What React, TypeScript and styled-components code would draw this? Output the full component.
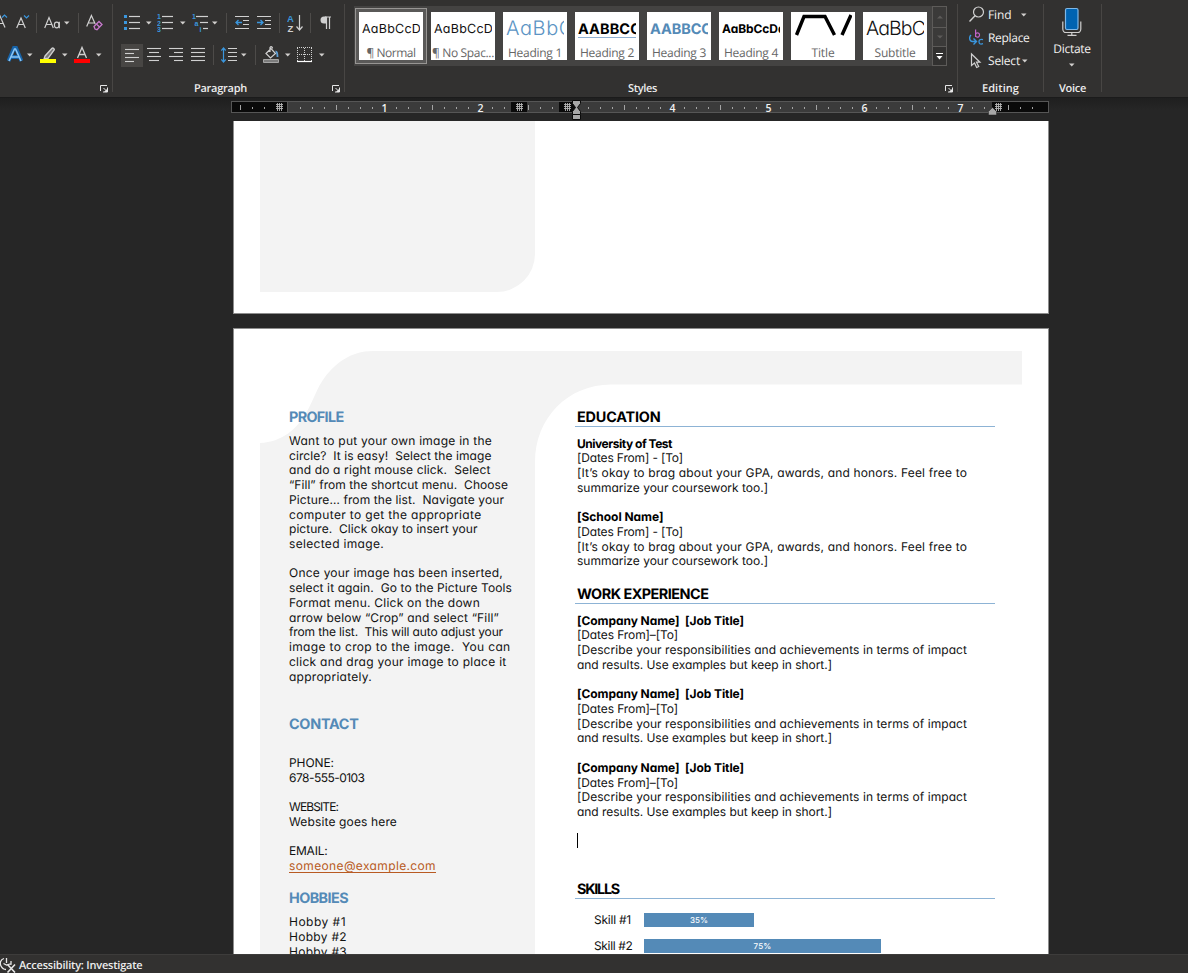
import React, { useLayoutEffect, useRef, useState } from "react";
import styled, { createGlobalStyle, css } from "styled-components";

const ui = `"Open Sans", "Noto Sans", sans-serif`;
const gothic = `Inter, Lato, sans-serif`;

const Global = createGlobalStyle`
  html, body { margin: 0; padding: 0; background: #262626; overflow: hidden; }
  * { box-sizing: border-box; }
  svg { display: block; flex: none; }
`;

/* Text tracked out (or in) so that it fills a given measure. */
const FitText = styled.span`
  display: inline-block;
  white-space: pre;
  text-rendering: geometricPrecision;
`;
function Fit({ w, children }: { w: number; children: string }) {
  const ref = useRef<HTMLSpanElement>(null);
  const [spacing, setSpacing] = useState(0);
  useLayoutEffect(() => {
    const el = ref.current;
    if (!el) return;
    el.style.letterSpacing = "0px";
    const natural = el.getBoundingClientRect().width;
    setSpacing((w - natural) / children.length);
    el.style.letterSpacing = `${(w - natural) / children.length}px`;
  }, [w, children]);
  return <FitText ref={ref} style={{ letterSpacing: `${spacing}px` }}>{children}</FitText>;
}

const Window = styled.div`
  width: 1188px;
  height: 973px;
  display: flex;
  flex-direction: column;
  overflow: hidden;
  background: #262626;
  font-family: ${ui};
`;

/* ---------- ribbon ---------- */
const Ribbon = styled.header`
  height: 98px;
  flex: none;
  display: flex;
  background: #323130;
  border-bottom: 1px solid #1b1b1b;
`;
const Group = styled.section<{ $w: number }>`
  position: relative;
  width: ${(p) => p.$w}px;
  height: 97px;
  flex: none;
  display: flex;
  flex-direction: column;
  padding-top: 11px;
  &::after {
    content: "";
    position: absolute;
    right: 0;
    top: 4px;
    width: 1px;
    height: 88px;
    background: #484644;
  }
`;
const ToolRow = styled.div`
  display: flex;
  height: 24px;
  margin-bottom: 8px;
  align-items: center;
`;
const Slot = styled.div<{ $ml?: number }>`
  margin-left: ${(p) => p.$ml ?? 0}px;
  flex: none;
`;
const Divider = styled.div<{ $ml: number }>`
  width: 1px;
  height: 20px;
  margin-left: ${(p) => p.$ml}px;
  background: #4d4b49;
`;
const Pressed = styled.div`
  width: 22px;
  height: 23px;
  margin-left: 8px;
  padding-left: 3px;
  background: #484644;
`;
const Caption = styled.div<{ $shift?: number }>`
  position: absolute;
  left: ${(p) => p.$shift ?? 0}px;
  right: 0;
  top: 80px;
  line-height: 16px;
  font-size: 11px;
  font-weight: 600;
  text-align: center;
  color: #ececec;
`;
const Launcher = styled.svg`
  position: absolute;
  right: 4px;
  bottom: 4px;
`;
const LaunchIcon = () => (
  <Launcher width="9" height="9" fill="none" stroke="#e6e6e6">
    <path d="M.5 7V1.500H7M3.500 4l3 3" />
    <path d="M7.500 3.500V8H3" />
    <path d="M7.500 4.500v3.500H4z" fill="#e6e6e6" stroke="none" />
  </Launcher>
);
const Caret = ({ ml, c = "#d2d0ce" }: { ml: number; c?: string }) => (
  <Slot $ml={ml}>
    <svg width="6" height="4"><path d="M0 .5h5.500L2.750 3.500z" fill={c} /></svg>
  </Slot>
);

const G = "#d0d0d0";
const B = "#3a96dd";
const icon = (w: number, body: React.ReactNode) => (
  <svg width={w} height="24" viewBox={`0 0 ${w} 24`} fill="none" stroke={G} strokeWidth="1">{body}</svg>
);

const AlignIcon = ({ rows }: { rows: [number, number][] }) =>
  icon(15, rows.map(([a, b], i) => <path key={i} d={`M${a} ${5.5 + i * 4}H${b}`} strokeWidth="1.1" />));

const FontGroup = () => (
  <Group $w={113}>
    <ToolRow>
      <Slot>{icon(9, <><path d="M-5 16.500L0 5l5 11.500M-3 12.500h6" strokeWidth="1.200" /><path d="M2 6.500l2.500-2.500L7 6.500" stroke={B} strokeWidth="1.200" /></>)}</Slot>
      <Slot $ml={7}>{icon(14, <><path d="M.7 17L5 7l4.300 10M2.300 13.500h5.400" strokeWidth="1.200" /><path d="M8 4.500l2.500 2.500L13 4.500" stroke={B} strokeWidth="1.200" /></>)}</Slot>
      <Divider $ml={6} />
      <Slot $ml={7}>{icon(17, <><path d="M.7 17L5 6.500 9.300 17M2.200 13.500h5.600" strokeWidth="1.200" /><ellipse cx="12.700" cy="14" rx="2.300" ry="2.800" strokeWidth="1.200" /><path d="M15.300 10.700V17.200" strokeWidth="1.200" /></>)}</Slot>
      <Caret ml={3} />
      <Divider $ml={8} />
      <Slot $ml={7}>{icon(17, <><path d="M.7 15.500L5.400 4.500l3.800 8.500M2.300 12h6" strokeWidth="1.200" /><path d="M8 15.500l5-5 3 3-5 5.200-2-.7z M10.500 13l3.200 3.200" stroke="#c779cd" strokeWidth="1.300" /></>)}</Slot>
    </ToolRow>
    <ToolRow>
      <Slot $ml={7}>{icon(16, <><path d="M1.500 18L7 5h2l5.500 13M4.500 14h7" stroke="#1763a8" strokeWidth="4" /><path d="M2 18L7.500 6h1L14 18M4.500 14h7" stroke="#8ac6f5" strokeWidth="1.600" /></>)}</Slot>
      <Caret ml={4} />
      <Slot $ml={7}>{icon(16, <><path d="M5 13L12 5.200c1-.8 3 .8 2 2L8 15.300l-4 .7z" strokeWidth="1.400" fill="#777" /><path d="M0 18h16" stroke="#ffff00" strokeWidth="4" /></>)}</Slot>
      <Caret ml={6} />
      <Slot $ml={6}>{icon(16, <><path d="M3.500 15L8 4.500 12.500 15M5 11.500h6" strokeWidth="1.300" /><path d="M0 18h16" stroke="#ff0000" strokeWidth="4" /></>)}</Slot>
      <Caret ml={6} />
    </ToolRow>
    <LaunchIcon />
  </Group>
);

const Tiny = styled.text`
  font: 700 7px "Liberation Sans", sans-serif;
  fill: ${B};
  stroke: none;
`;
const SortText = styled.text`
  font: 700 9.5px "Liberation Sans", sans-serif;
  stroke: none;
`;
const ListLines = ({ xs }: { xs: number[] }) => <>{xs.map((x, i) => <path key={i} d={`M${x} ${5.5 + i * 6}H16`} strokeWidth="1.200" />)}</>;

const ParagraphGroup = () => (
  <Group $w={232}>
    <ToolRow>
      <Slot $ml={11}>{icon(16, <><path d="M0 4h3v3H0zM0 10h3v3H0zM0 16h3v3H0z" fill={B} stroke="none" /><ListLines xs={[5, 5, 5]} /></>)}</Slot>
      <Caret ml={6} />
      <Slot $ml={5}>{icon(16, <><Tiny x="0" y="8">1</Tiny><Tiny x="0" y="14.500">2</Tiny><Tiny x="0" y="21">3</Tiny><ListLines xs={[5, 5, 5]} /></>)}</Slot>
      <Caret ml={7} />
      <Slot $ml={6}>{icon(16, <><Tiny x="0" y="8">1</Tiny><Tiny x="2.500" y="14.500">a</Tiny><Tiny x="7.500" y="21">i</Tiny><ListLines xs={[4, 8, 11]} /></>)}</Slot>
      <Caret ml={4} />
      <Divider $ml={8} />
      <Slot $ml={8}>{icon(15, <><path d="M0 5.500h14M8 9.500h6M8 13.500h6M0 17.500h14" /><path d="M7 11.500H1M3.500 9L1 11.500 3.500 14" stroke={B} strokeWidth="1.300" /></>)}</Slot>
      <Slot $ml={7}>{icon(15, <><path d="M0 5.500h14M8 9.500h6M8 13.500h6M0 17.500h14" /><path d="M0 11.500h6M3.500 9L6 11.500 3.500 14" stroke={B} strokeWidth="1.300" /></>)}</Slot>
      <Divider $ml={7} />
      <Slot $ml={7}>{icon(17, <><SortText x="0" y="10.500" fill={B}>A</SortText><SortText x="0.500" y="20.500" fill={G}>Z</SortText><path d="M12.500 4v15M9.500 15.500l3 3.500 3-3.500" strokeWidth="1.200" /></>)}</Slot>
      <Divider $ml={6} />
      <Slot $ml={9}>{icon(12, <><path d="M11 6H5M6.500 6v12M9.500 6v12" strokeWidth="1.200" /><path d="M6.500 5.500H4a3.500 3.500 0 0 0 0 7h2.500z" fill={G} stroke="none" /></>)}</Slot>
    </ToolRow>
    <ToolRow>
      <Pressed><AlignIcon rows={[[1, 15], [1, 10], [1, 15], [1, 10]]} /></Pressed>
      <Slot $ml={4}><AlignIcon rows={[[0, 14], [2, 12], [0, 14], [2, 12]]} /></Slot>
      <Slot $ml={7}><AlignIcon rows={[[0, 14], [5, 14], [0, 14], [5, 14]]} /></Slot>
      <Slot $ml={7}><AlignIcon rows={[[0, 14], [0, 14], [0, 14], [0, 14]]} /></Slot>
      <Divider $ml={7} />
      <Slot $ml={7}>{icon(16, <><path d="M2.500 5v14M.3 7.500l2.200-2.500 2.200 2.500M.3 16.500L2.500 19l2.200-2.500" stroke={B} strokeWidth="1.200" /><path d="M7 5.500h9M7 9.500h9M7 13.500h9M7 17.500h9" /></>)}</Slot>
      <Caret ml={4} />
      <Divider $ml={8} />
      <Slot $ml={7}>{icon(17, <><path d="M3 10.500L8 5.500l4.500 5-5 4.500zM7 9V4.500c1-1.500 2.500-.5 2.500 1" strokeWidth="1.200" /><path d="M12.500 8.500c2 0 2 3 2 5.500" stroke="#5d9fd6" strokeWidth="1.800" /><path d="M.5 16.500h15v3H.5z" fill="#7c7c7c" stroke="#a5a5a5" /></>)}</Slot>
      <Caret ml={5} />
      <Slot $ml={6}>{icon(16, <><path d="M0 4.500h16M0 11.500h16M.5 5v14M14.500 5v14M7.500 5v14" strokeDasharray="1 1" /><path d="M0 18.500h15" stroke="#fff" strokeWidth="1.200" /></>)}</Slot>
      <Caret ml={6} />
    </ToolRow>
    <Caption $shift={-17}><Fit w={53}>Paragraph</Fit></Caption>
    <LaunchIcon />
  </Group>
);

const Gallery = styled.div`
  display: flex;
  width: 593px;
  height: 60px;
  margin: -5px 0 0 9px;
  padding-left: 1px;
  background: #444342;
`;
const Tile = styled.div<{ $on?: boolean }>`
  width: 72px;
  height: 56px;
  margin-top: 2px;
  padding: 4px;
  flex: none;
  ${(p) => p.$on && css`background: #5a5958; box-shadow: inset 0 0 0 1px #979593;`}
`;
const TileFace = styled.div`
  width: 64px;
  height: 48px;
  background: #fff;
  display: flex;
  flex-direction: column;
  align-items: center;
  overflow: hidden;
`;
const Preview = styled.div<{ $size: number; $c?: string; $bold?: boolean; $line?: boolean; $light?: boolean }>`
  width: 58px;
  height: 26px;
  line-height: 33px;
  overflow: hidden;
  font-family: ${gothic};
  font-feature-settings: "cv11";
  font-size: ${(p) => p.$size}px;
  font-weight: ${(p) => (p.$bold ? 700 : p.$light ? 300 : 400)};
  color: ${(p) => p.$c ?? "#111"};
  white-space: nowrap;
  border-bottom: 1px solid ${(p) => (p.$line ? "#8fb0d3" : "transparent")};
`;
const TileName = styled.div`
  height: 22px;
  line-height: 30px;
  font-size: 12px;
  color: #666;
  white-space: nowrap;
`;
const Scroller = styled.div`
  width: 15px;
  height: 60px;
  margin-left: 1px;
  border: 1px solid #5d5b59;
  display: flex;
  flex-direction: column;
`;
const ScrollCell = styled.div<{ $h: number; $on?: boolean }>`
  height: ${(p) => p.$h}px;
  display: flex;
  align-items: center;
  justify-content: center;
  background: ${(p) => (p.$on ? "#323130" : "#3b3a39")};
  & + & { border-top: 1px solid #5d5b59; }
`;

type StyleDef = { name: string; w: number; sample?: string; sw?: number; size?: number; c?: string; bold?: boolean; line?: boolean; light?: boolean };
const blue = "#548ab7";
const styleDefs: StyleDef[] = [
  { name: "¶ Normal", w: 49, sample: "AaBbCcDd", sw: 67, size: 12.5 },
  { name: "¶ No Spac...", w: 62, sample: "AaBbCcDd", sw: 67, size: 12.5 },
  { name: "Heading 1", w: 54, sample: "AaBbC", sw: 68, size: 20, c: "#5b94c4", light: true },
  { name: "Heading 2", w: 54, sample: "AABBCC", sw: 63, size: 14.5, bold: true, line: true, c: "#000" },
  { name: "Heading 3", w: 54, sample: "AABBCC", sw: 62, size: 14.5, bold: true, c: blue },
  { name: "Heading 4", w: 54, sample: "AaBbCcDd", sw: 63.5, size: 12, bold: true, c: "#000" },
  { name: "Title", w: 23 },
  { name: "Subtitle", w: 41, sample: "AaBbC", sw: 59, size: 19.5, light: true },
];

const StylesGroup = () => (
  <Group $w={613}>
    <Gallery>
      {styleDefs.map((s, i) => (
        <Tile key={s.name} $on={i === 0}>
          <TileFace>
            {s.sample ? (
              <Preview $size={s.size!} $c={s.c} $bold={s.bold} $line={s.line} $light={s.light}>
                <Fit w={s.sw!}>{s.sample}</Fit>
              </Preview>
            ) : (
              <svg width="58" height="26" fill="none" stroke="#000" strokeWidth="3.400">
                <path d="M2.500 23L10 4.500H31L40.500 23M48 23L57 3" />
              </svg>
            )}
            <TileName><Fit w={s.w}>{s.name}</Fit></TileName>
          </TileFace>
        </Tile>
      ))}
      <Scroller>
        <ScrollCell $h={20}><svg width="6" height="4"><path d="M0 3.500h6L3 .5z" fill="#5d5b59" /></svg></ScrollCell>
        <ScrollCell $h={19}><svg width="6" height="4"><path d="M0 .5h6L3 3.500z" fill="#5d5b59" /></svg></ScrollCell>
        <ScrollCell $h={19} $on><svg width="7" height="7"><path d="M0 0h7v1H0zM.5 3h6l-3 3.500z" fill="#fff" /></svg></ScrollCell>
      </Scroller>
    </Gallery>
    <Caption $shift={-18}><Fit w={29}>Styles</Fit></Caption>
    <LaunchIcon />
  </Group>
);

const Command = styled.div`
  display: flex;
  align-items: center;
  height: 23px;
  padding-left: 11px;
  font-size: 12px;
  color: #f3f2f1;
`;
const CommandText = styled.span`
  margin-left: 3px;
  line-height: 16px;
`;
const EditingTools = styled.div`
  margin-top: -8px;
`;
const cmdIcon = (body: React.ReactNode) => (
  <svg width="16" height="18" fill="none" stroke={G} strokeWidth="1.200">{body}</svg>
);
const EditingGroup = () => (
  <Group $w={86}>
    <EditingTools>
      <Command>
        {cmdIcon(<><circle cx="9.500" cy="6" r="5" /><path d="M6 9.700L.5 15.500" strokeWidth="1.400" /></>)}
        <CommandText><Fit w={23.5}>Find</Fit></CommandText><Caret ml={9} />
      </Command>
      <Command>
        {cmdIcon(<>
          <path d="M6.600 .5v7.500M6.600 5.500a2 2.200 0 1 1 0 1" stroke="#c065c8" />
          <path d="M2 6C0 8 0 12 3.500 12.500h3.500M4.500 9.500l3 3-3 3" stroke={B} strokeWidth="1.400" />
          <path d="M14 10.700c-3-1-4 .3-4 2s1 3 4 2" stroke={B} strokeWidth="1.300" />
        </>)}
        <CommandText><Fit w={41.5}>Replace</Fit></CommandText>
      </Command>
      <Command>
        {cmdIcon(<path d="M2.500 2v11.500l3-2.500 2.200 4.500 2-1L7.500 10.200H11z" />)}
        <CommandText><Fit w={32}>Select</Fit></CommandText><Caret ml={2} />
      </Command>
    </EditingTools>
    <Caption $shift={-1}><Fit w={37}>Editing</Fit></Caption>
  </Group>
);

const Dictate = styled.div`
  display: flex;
  flex-direction: column;
  align-items: center;
  margin-top: -4px;
  padding-right: 2px;
  font-size: 12px;
  line-height: 16px;
  color: #f3f2f1;
`;
const DictateLabel = styled.span`
  margin: 5px 0 6px;
  height: 16px;
`;
const VoiceGroup = () => (
  <Group $w={58}>
    <Dictate>
      <svg width="20" height="29" fill="none" stroke={G} strokeWidth="1.200">
        <rect x="3.500" y="1.500" width="12.500" height="21" rx="1.500" fill="#0063b1" stroke="#7fb8e8" />
        <path d="M.8 14.500v7.500c0 2 1.500 3.500 3 3.500h12c1.500 0 3-1.500 3-3.500v-7.500M9.800 25.500v3M5.500 28.400h9" />
      </svg>
      <DictateLabel><Fit w={37.5}>Dictate</Fit></DictateLabel>
      <svg width="6" height="4"><path d="M0 .5h5.500L2.750 3.500z" fill="#d2d0ce" /></svg>
    </Dictate>
    <Caption $shift={-1}><Fit w={27}>Voice</Fit></Caption>
  </Group>
);

/* ---------- ruler ---------- */
const Workspace = styled.main`
  flex: 1;
  min-height: 0;
  overflow: hidden;
  background: linear-gradient(#1f1f1f, #262626 12px);
  padding-top: 3px;
`;
const Ruler = styled.div`
  position: relative;
  width: 818px;
  height: 12px;
  margin-left: 231px;
  padding-left: 2px;
  display: flex;
  overflow: visible;
  border: 1px solid #565656;
  background: linear-gradient(90deg,
    #0a0a0a 0 55px, #565656 55px 56px, #3b3b3b 56px 279px,
    #0a0a0a 279px 295px, #3b3b3b 295px 327px,
    #0a0a0a 327px 344px, #3b3b3b 344px 760px, #0a0a0a 760px);
`;
const Cell = styled.div`
  width: 12px;
  height: 10px;
  flex: none;
  display: flex;
  align-items: center;
  justify-content: center;
  font-size: 10.5px;
  font-weight: 600;
  line-height: 10px;
  color: #f2f2f2;
`;
const Num = styled.span`
  padding: 1px 0 0 1px;
`;
const Tick = styled.i<{ $tall?: boolean }>`
  width: 1px;
  height: ${(p) => (p.$tall ? 5 : 2)}px;
  margin: 1px 0 0 1px;
  background: #a4a4a4;
`;
const Marker = styled.svg<{ $x: number; $y: number }>`
  position: absolute;
  left: ${(p) => p.$x}px;
  top: ${(p) => p.$y}px;
`;
const RulerBar = () => (
  <Ruler>
    {Array.from({ length: 67 }, (_, i) => {
      const k = i - 4;
      if ([-1, 0, 19, 23, 24, 59].includes(k)) return <Cell key={k} />;
      if (k % 8 === 0) return <Cell key={k}><Num>{k / 8}</Num></Cell>;
      return <Cell key={k}><Tick $tall={Math.abs(k % 8) === 4} /></Cell>;
    })}
    {[44, 284, 332, 763].map((x) => (
      <Marker key={x} $x={x} $y={1} width="8" height="8" stroke="#b4b4b4">
        <path d="M1.500 0v8M3.500 0v8M5.500 0v8M0 1.500h7M0 3.500h7M0 5.500h7" strokeWidth=".9" />
      </Marker>
    ))}
    <Marker $x={340} $y={-3} width="9" height="22" fill="#a8a8a8" stroke="#0a0a0a">
      <path d="M.5 1.500h8v3l-3 4 3 4v3h-8v-3l3-4-3-4z" />
      <path d="M.5 15.500h8v5h-8z" />
    </Marker>
    <Marker $x={756} $y={5} width="9" height="9" fill="#a8a8a8" stroke="#222" strokeWidth=".5">
      <path d="M.5 8V4.500l4-4 4 4V8z" />
    </Marker>
  </Ruler>
);

/* ---------- document ---------- */
const FirstPage = styled.article`
  width: 816px;
  height: 193px;
  margin: 8px 0 0 233px;
  padding-left: 26px;
  background: #fff;
  border: 1px solid #8d8d8d;
  border-top: 0;
`;
const SidebarEnd = styled.div`
  width: 275px;
  height: 171px;
  background: #f3f3f3;
  border-bottom-right-radius: 38px;
`;
const SecondPage = styled.article`
  position: relative;
  width: 816px;
  height: 1056px;
  margin: 14px 0 0 233px;
  padding-top: 78px;
  display: flex;
  background: #fff;
  border: 1px solid #8d8d8d;
  font-family: ${gothic};
  font-feature-settings: "cv11";
  color: #111;
`;
const Backdrop = styled.svg`
  position: absolute;
  left: 0;
  top: 0;
`;
const Left = styled.div`
  position: relative;
  width: 286px;
  padding-left: 55px;
`;
const Right = styled.div`
  position: relative;
  width: 475px;
  padding-left: 57px;
`;
const H = styled.h2<{ $blue?: boolean; $mt?: number }>`
  margin: ${(p) => p.$mt ?? 0}px 0 0 ${(p) => (p.$blue ? 0 : -2)}px;
  padding-left: ${(p) => (p.$blue ? 0 : 2)}px;
  width: ${(p) => (p.$blue ? "auto" : "420px")};
  height: 20px;
  line-height: 20px;
  font-size: 14.4px;
  font-weight: ${(p) => (p.$blue ? 700 : 650)};
  color: ${(p) => (p.$blue ? blue : "#000")};
  border-bottom: ${(p) => (p.$blue ? "0" : "1px solid #8db3d5")};
`;
const Block = styled.div<{ $mt: number }>`
  margin-top: ${(p) => p.$mt}px;
`;
const Line = styled.div<{ $bold?: boolean; $link?: boolean }>`
  height: 14.72px;
  line-height: 14.72px;
  font-size: 12px;
  font-weight: ${(p) => (p.$bold ? 650 : 380)};
  color: ${(p) => (p.$link ? "#b85a22" : p.$bold ? "#000" : "#111")};
  ${(p) => p.$link && css`span { text-decoration: underline; text-underline-offset: 1.5px; }`}
`;
type L = [string, number, ("b" | "a")?];
const Lines = ({ mt, items }: { mt: number; items: L[] }) => (
  <Block $mt={mt}>
    {items.map(([t, w, kind], i) => (
      <Line key={i} $bold={kind === "b"} $link={kind === "a"}>{t ? <Fit w={w}>{t}</Fit> : null}</Line>
    ))}
  </Block>
);

const profile: L[] = [
  ["Want to put your own image in the", 203],
  ["circle?  It is easy!  Select the image", 202.5],
  ["and do a right mouse click.  Select", 201.5],
  ["“Fill” from the shortcut menu.  Choose", 219],
  ["Picture… from the list.  Navigate your", 215],
  ["computer to get the appropriate", 192.5],
  ["picture.  Click okay to insert your", 188.5],
  ["selected image.", 95],
  ["", 0],
  ["Once your image has been inserted,", 214],
  ["select it again.  Go to the Picture Tools", 223],
  ["Format menu. Click on the down", 191],
  ["arrow below “Crop” and select “Fill”", 210],
  ["from the list.  This will auto adjust your", 214],
  ["image to crop to the image.  You can", 221.5],
  ["click and drag your image to place it", 217.5],
  ["appropriately.", 83],
];
const contact: L[] = [
  ["PHONE:", 45],
  ["678-555-0103", 75.5],
  ["", 0],
  ["WEBSITE:", 49],
  ["Website goes here", 108],
  ["", 0],
  ["EMAIL:", 38.5],
  ["someone@example.com", 147, "a"],
];
const study: L[] = [
  ["[Dates From] - [To]", 106],
  ["[It’s okay to brag about your GPA, awards, and honors. Feel free to", 390],
  ["summarize your coursework too.]", 191],
];
const job: L[] = [
  ["[Company Name]  [Job Title]", 167, "b"],
  ["[Dates From]–[To]", 101],
  ["[Describe your responsibilities and achievements in terms of impact", 390],
  ["and results. Use examples but keep in short.]", 255],
];
const gap: L = ["", 0];

const InsertionPoint = styled.div`
  width: 1px;
  height: 15px;
  margin-top: 13px;
  background: #000;
`;
const SkillRow = styled.div<{ $mt: number }>`
  display: flex;
  align-items: center;
  height: 15px;
  margin-top: ${(p) => p.$mt}px;
  padding-left: 17px;
  font-size: 12px;
  font-weight: 380;
`;
const SkillName = styled.span`
  width: 50px;
  line-height: 15px;
`;
const SkillBar = styled.div`
  height: 14px;
  background: ${blue};
  color: #fff;
  font-size: 8px;
  font-weight: 500;
  line-height: 14px;
  text-align: center;
`;
const skills = [
  { name: "Skill #1", nw: 37, pct: "35%", width: 110, mt: 13.3 },
  { name: "Skill #2", nw: 38.5, pct: "75%", width: 237, mt: 11 },
];

const ResumePage = () => (
  <SecondPage>
    <Backdrop width="814" height="640" viewBox="234 329 814 640">
      <path fill="#f3f3f3" d="M1022 351H373C350 351 335 364 325 377C316 389 314 400 306 413C297 429 282 442 260 443V969H535V462C535 418 568 384.500 611 384.500H1022Z" />
    </Backdrop>
    <Left>
      <H $blue><Fit w={54.5}>PROFILE</Fit></H>
      <Lines mt={7} items={profile} />
      <H $blue $mt={29.7}><Fit w={69.5}>CONTACT</Fit></H>
      <Lines mt={22.2} items={contact} />
      <H $blue $mt={13.8}><Fit w={59}>HOBBIES</Fit></H>
      <Lines mt={7.5} items={[["Hobby #1", 57], ["Hobby #2", 58], ["Hobby #3", 58]]} />
    </Left>
    <Right>
      <H><Fit w={83.5}>EDUCATION</Fit></H>
      <Lines mt={9.7} items={[["University of Test", 95, "b"], ...study, gap, ["[School Name]", 86.5, "b"], ...study]} />
      <H $mt={14.8}><Fit w={131.5}>WORK EXPERIENCE</Fit></H>
      <Lines mt={9.7} items={[...job, gap, ...job, gap, ...job]} />
      <InsertionPoint />
      <H $mt={31.2}><Fit w={42}>SKILLS</Fit></H>
      {skills.map((s) => (
        <SkillRow key={s.name} $mt={s.mt}>
          <SkillName><Fit w={s.nw}>{s.name}</Fit></SkillName>
          <SkillBar style={{ width: s.width }}><Fit w={18}>{s.pct}</Fit></SkillBar>
        </SkillRow>
      ))}
    </Right>
  </SecondPage>
);

/* ---------- status bar ---------- */
const Status = styled.footer`
  height: 19px;
  flex: none;
  display: flex;
  align-items: center;
  background: #323130;
  border-top: 1px solid #3d3c3b;
  color: #ececec;
  font-size: 11px;
  font-weight: 600;
  line-height: 16px;
`;
const StatusIcon = styled.svg`
  margin-right: 3px;
`;
const StatusText = styled.span`
  padding-top: 2px;
`;

export default function App() {
  return (
    <Window>
      <Global />
      <Ribbon>
        <FontGroup />
        <ParagraphGroup />
        <StylesGroup />
        <EditingGroup />
        <VoiceGroup />
      </Ribbon>
      <Workspace>
        <RulerBar />
        <FirstPage><SidebarEnd /></FirstPage>
        <ResumePage />
      </Workspace>
      <Status>
        <StatusIcon width="16" height="18" fill="none" stroke="#e8e8e8" strokeWidth="1.300">
          <path d="M4 3.500C.5 4.500-.5 8 1 11s3 3.500 5 3.500M6.500 3v5M3.500 8.500l3 1.500 5-1.500M11 6v4" />
          <path d="M7.500 9.500l7.500 8M15 9.500l-7.500 8" strokeWidth="1.600" />
        </StatusIcon>
        <StatusText><Fit w={123.5}>Accessibility: Investigate</Fit></StatusText>
      </Status>
    </Window>
  );
}
